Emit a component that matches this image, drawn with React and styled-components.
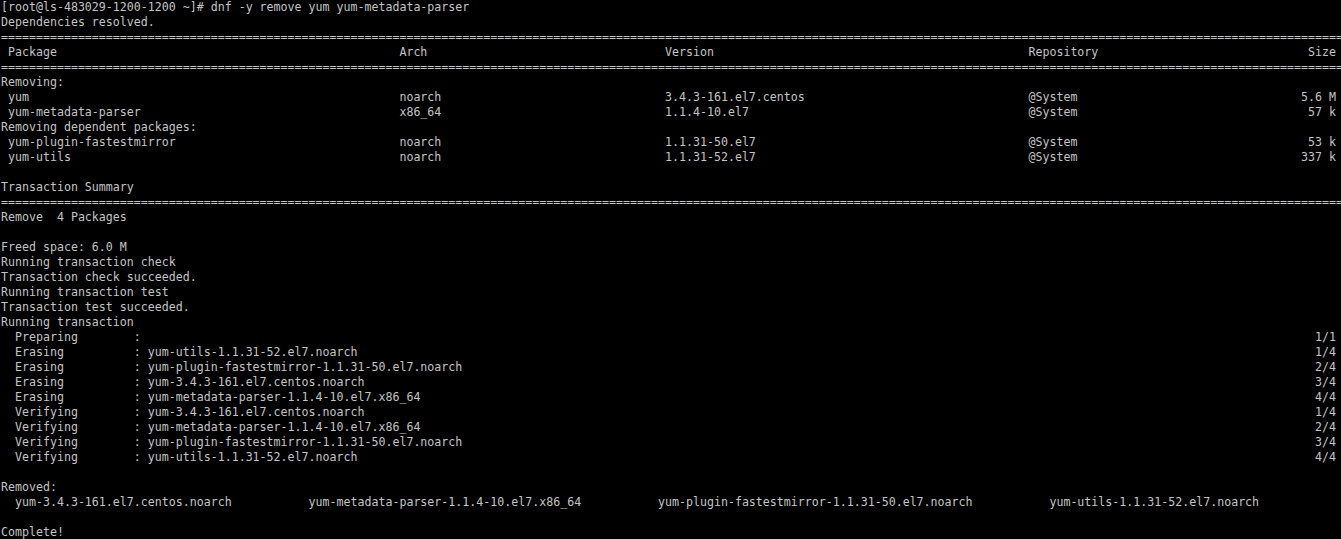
import React from "react";
import styled, { createGlobalStyle } from "styled-components";

const Global = createGlobalStyle`
  html, body { margin: 0; padding: 0; background: #000; }
  body { overflow: hidden; }
`;

const Screen = styled.div`
  width: 1341px;
  height: 539px;
  background: #000;
  overflow: hidden;
  padding: 0 0 0 1px;
  box-sizing: border-box;
`;

const Output = styled.div`
  display: flex;
  flex-direction: column;
  font-family: "DejaVu Sans Mono", "Liberation Mono", monospace;
  font-size: 11.627px;
  line-height: 15px;
  color: #c4c4c4;
`;

const Line = styled.pre`
  margin: 0;
  height: 15px;
  font: inherit;
  white-space: pre;
  overflow: hidden;
`;

const COLS = 191;

const at = (parts) => {
  let s = "";
  parts.forEach(([col, text, align]) => {
    const start = align === "right" ? col - text.length + 1 : col;
    s = s.padEnd(start, " ") + text;
  });
  return s;
};

const rule = "=".repeat(COLS + 1);

const pkgRow = (name, arch, ver, repo, size) =>
  at([
    [1, name],
    [57, arch],
    [95, ver],
    [147, repo],
    [190, size, "right"],
  ]);

const step = (label, name, count) =>
  at([[2, label], [19, ": " + name], [190, count, "right"]]);

const lines = [
  "[root@ls-483029-1200-1200 ~]# dnf -y remove yum yum-metadata-parser",
  "Dependencies resolved.",
  rule,
  pkgRow("Package", "Arch", "Version", "Repository", "Size"),
  rule,
  "Removing:",
  pkgRow("yum", "noarch", "3.4.3-161.el7.centos", "@System", "5.6 M"),
  pkgRow("yum-metadata-parser", "x86_64", "1.1.4-10.el7", "@System", "57 k"),
  "Removing dependent packages:",
  pkgRow("yum-plugin-fastestmirror", "noarch", "1.1.31-50.el7", "@System", "53 k"),
  pkgRow("yum-utils", "noarch", "1.1.31-52.el7", "@System", "337 k"),
  "",
  "Transaction Summary",
  rule,
  "Remove  4 Packages",
  "",
  "Freed space: 6.0 M",
  "Running transaction check",
  "Transaction check succeeded.",
  "Running transaction test",
  "Transaction test succeeded.",
  "Running transaction",
  at([[2, "Preparing"], [19, ":"], [190, "1/1", "right"]]),
  step("Erasing", "yum-utils-1.1.31-52.el7.noarch", "1/4"),
  step("Erasing", "yum-plugin-fastestmirror-1.1.31-50.el7.noarch", "2/4"),
  step("Erasing", "yum-3.4.3-161.el7.centos.noarch", "3/4"),
  step("Erasing", "yum-metadata-parser-1.1.4-10.el7.x86_64", "4/4"),
  step("Verifying", "yum-3.4.3-161.el7.centos.noarch", "1/4"),
  step("Verifying", "yum-metadata-parser-1.1.4-10.el7.x86_64", "2/4"),
  step("Verifying", "yum-plugin-fastestmirror-1.1.31-50.el7.noarch", "3/4"),
  step("Verifying", "yum-utils-1.1.31-52.el7.noarch", "4/4"),
  "",
  "Removed:",
  at([
    [2, "yum-3.4.3-161.el7.centos.noarch"],
    [44, "yum-metadata-parser-1.1.4-10.el7.x86_64"],
    [94, "yum-plugin-fastestmirror-1.1.31-50.el7.noarch"],
    [150, "yum-utils-1.1.31-52.el7.noarch"],
  ]),
  "",
  "Complete!",
];

export default function App() {
  return (
    <Screen>
      <Global />
      <Output>
        {lines.map((l, i) => (
          <Line key={i}>{l}</Line>
        ))}
      </Output>
    </Screen>
  );
}
